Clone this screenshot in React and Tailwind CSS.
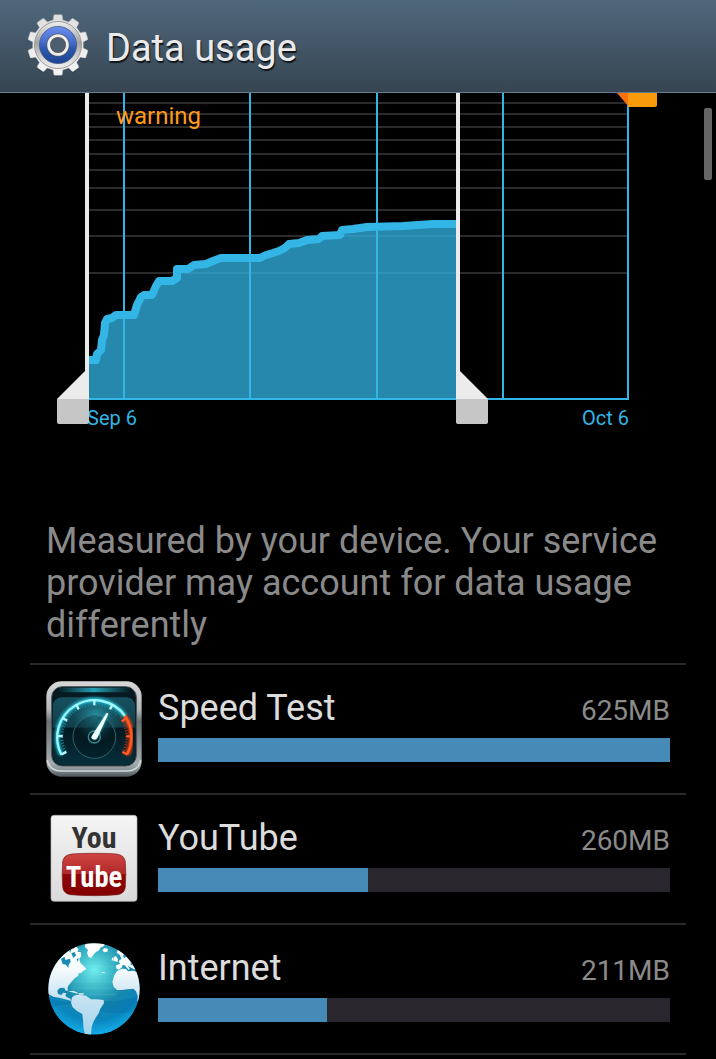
import React from "react";

const GRID_ROWS = [103, 114, 127, 140, 154, 170, 188, 210, 236, 273];
const GRID_COLS = [124, 250, 377, 503];

const SERIES =
  "89,360 96,360 97,354 101,350 102,340 104,335 105,323 107,319 112,318 116,315 134,315 137,305 141,297 144,295 152,295 156,286 159,281 172,281 177,278 177,269 188,269 194,265 206,264 213,261 221,258 260,258 266,255 273,253 279,251 283,249 286,247 289,244 299,243 307,240 319,239 322,236 340,235 342,230 353,229 367,227 403,226 433,224 457,224";

function gearPath(cx, cy, root, tip, teeth) {
  const at = (r, deg) => {
    const a = ((deg - 90) * Math.PI) / 180;
    return `${(cx + r * Math.cos(a)).toFixed(2)} ${(cy + r * Math.sin(a)).toFixed(2)}`;
  };
  const parts = [];
  for (let i = 0; i < teeth; i++) {
    const c = (i * 360) / teeth;
    parts.push(`${at(root, c - 11)} L${at(tip - 1.2, c - 8.5)} L${at(tip, c - 7)} L${at(tip, c + 7)} L${at(tip - 1.2, c + 8.5)} L${at(root, c + 11)}`);
  }
  return `M${parts.join(" L")} Z`;
}

function GearIcon() {
  return (
    <svg viewBox="0 0 64 64" className="size-16 shrink-0" aria-hidden="true">
      <defs>
        <linearGradient id="gearBody" x1="0" y1="0" x2="0" y2="1">
          <stop offset="0" stopColor="#dedede" />
          <stop offset="0.5" stopColor="#ececec" />
          <stop offset="1" stopColor="#f4f4f4" />
        </linearGradient>
        <linearGradient id="gearRing" x1="0" y1="0" x2="0" y2="1">
          <stop offset="0" stopColor="#f0f0f0" />
          <stop offset="0.45" stopColor="#a4a4a4" />
          <stop offset="0.75" stopColor="#d2d2d2" />
          <stop offset="1" stopColor="#f0f0f0" />
        </linearGradient>
        <linearGradient id="gearBlue" x1="0" y1="0" x2="0" y2="1">
          <stop offset="0" stopColor="#6a8eed" />
          <stop offset="0.4" stopColor="#486fd0" />
          <stop offset="0.6" stopColor="#2a58ae" />
          <stop offset="1" stopColor="#1e4590" />
        </linearGradient>
      </defs>
      <path d={gearPath(32, 31.8, 25.5, 31, 10)} fill="#1f2c38" opacity="0.5" />
      <path d={gearPath(32, 31, 25.5, 30.6, 10)} fill="url(#gearBody)" stroke="#a7adb2" strokeWidth="0.5" strokeLinejoin="round" />
      <circle cx="32" cy="31" r="23.5" fill="url(#gearRing)" stroke="#9c9c9c" strokeWidth="1" />
      <circle cx="32" cy="31" r="18.6" fill="url(#gearBlue)" stroke="#41547c" strokeWidth="0.7" />
      <circle cx="32" cy="31" r="9.1" fill="#4a5e70" stroke="#54585f" strokeWidth="5" />
      <circle cx="32" cy="31" r="9.4" fill="none" stroke="#eeeeee" strokeWidth="2.8" />
    </svg>
  );
}

function UsageChart() {
  return (
    <svg viewBox="0 93 716 340" className="block w-full font-[Roboto,sans-serif]" role="img" aria-label="Data usage from Sep 6 to Oct 6">
      {GRID_ROWS.map((y) => (
        <rect key={y} x="89" y={y - 1} width="539" height="2" fill="#2b2b2b" />
      ))}
      <polygon points={`89,399 ${SERIES} 457,399`} fill="#33b5e5" fillOpacity="0.75" />
      <rect x="89" y="398" width="540" height="2" fill="#33b5e5" />
      <polyline points={SERIES} fill="none" stroke="#33b5e5" strokeWidth="8" strokeLinejoin="round" />
      {GRID_COLS.map((x) => (
        <rect key={x} x={x - 1} y="93" width="2" height="306" fill="#33b5e5" />
      ))}
      <rect x="627" y="93" width="2" height="307" fill="#33b5e5" />
      <text x="116" y="124" fontSize="24" fill="#ff9a1a">warning</text>
      <text x="87" y="425" fontSize="20" fill="#33b5e5">Sep 6</text>
      <text x="629" y="425" fontSize="20" fill="#33b5e5" textAnchor="end">Oct 6</text>
      <polygon points="617,93 629,93 629,107" fill="#f9700f" />
      <path d="M628 93h29v12q0 2-2 2h-27z" fill="#fa9a0a" />
      <path d="M85 93h4v307H57v-1l28-28z" fill="#ebebeb" />
      <path d="M57 399h32v23q0 2-2 2H59q-2 0-2-2z" fill="#c6c6c6" />
      <path d="M456 93h4v278l28 28v1h-32z" fill="#ebebeb" />
      <path d="M456 399h32v23q0 2-2 2h-28q-2 0-2-2z" fill="#c6c6c6" />
    </svg>
  );
}

const ray = (deg, r, cx = 175, cy = 201) => {
  const a = (deg * Math.PI) / 180;
  return [cx + r * Math.cos(a), cy + r * Math.sin(a)];
};

function Ticks({ from, to, step, inner, outer, color, width }) {
  const ticks = [];
  for (let d = from; d <= to; d += step) {
    const [x1, y1] = ray(d, inner);
    const [x2, y2] = ray(d, outer);
    ticks.push(<line key={d} x1={x1} y1={y1} x2={x2} y2={y2} stroke={color} strokeWidth={width} />);
  }
  return <g>{ticks}</g>;
}

function SpeedTestIcon() {
  return (
    <svg viewBox="30 33 288 288" className="size-24 shrink-0" aria-hidden="true">
      <defs>
        <linearGradient id="stFrame" x1="0" y1="0" x2="0" y2="1">
          <stop offset="0" stopColor="#d8d8d8" />
          <stop offset="0.3" stopColor="#b5b8ba" />
          <stop offset="0.42" stopColor="#6a7276" />
          <stop offset="0.6" stopColor="#80898d" />
          <stop offset="0.86" stopColor="#a5adb1" />
          <stop offset="0.92" stopColor="#8b9499" />
          <stop offset="1" stopColor="#4b545a" />
        </linearGradient>
        <linearGradient id="stFace" x1="0" y1="0" x2="0" y2="1">
          <stop offset="0" stopColor="#16505f" />
          <stop offset="0.44" stopColor="#123e4b" />
          <stop offset="0.46" stopColor="#04171f" />
          <stop offset="1" stopColor="#05303c" />
        </linearGradient>
        <radialGradient id="stGlow">
          <stop offset="0" stopColor="#2ba3b5" stopOpacity="0.9" />
          <stop offset="1" stopColor="#1b7384" stopOpacity="0" />
        </radialGradient>
        <linearGradient id="stTop">
          <stop offset="0" stopColor="#06161c" />
          <stop offset="0.5" stopColor="#27a0b5" />
          <stop offset="1" stopColor="#06161c" />
        </linearGradient>
        <filter id="stBlur" x="-20%" y="-20%" width="140%" height="140%">
          <feGaussianBlur stdDeviation="5" />
        </filter>
      </defs>
      <rect x="31" y="34" width="286" height="286" rx="46" fill="url(#stFrame)" />
      <path d="M34 270Q40 303 76 303H272Q308 303 314 270" fill="none" stroke="#d2d8da" strokeWidth="5" />
      <rect x="47" y="50" width="254" height="238" rx="32" fill="#071a21" stroke="#4a5256" strokeWidth="3" />
      <rect x="62" y="53" width="224" height="14" rx="7" fill="url(#stTop)" />
      <rect x="51" y="82" width="246" height="202" rx="26" fill="url(#stFace)" />
      <circle cx="180" cy="142" r="72" fill="url(#stGlow)" />
      <circle cx="175" cy="201" r="64" fill="#03141b" fillOpacity="0.35" stroke="#2c6470" strokeWidth="3" />
      <path d="M76 254A112 112 0 0 1 267 138" fill="none" stroke="#20c4dc" strokeWidth="14" filter="url(#stBlur)" />
      <path d="M267 138A112 112 0 0 1 273 254" fill="none" stroke="#ff3c00" strokeWidth="14" filter="url(#stBlur)" />
      <Ticks from={154} to={318} step={5} inner={93} outer={101} color="#178b9d" width={3} />
      <Ticks from={-36} to={26} step={5} inner={93} outer={101} color="#a83415" width={3} />
      <path d="M76 254A112 112 0 0 1 267 138" fill="none" stroke="#9af6fd" strokeWidth="7" />
      <path d="M267 138A112 112 0 0 1 273 254" fill="none" stroke="#ff5a24" strokeWidth="7" />
      <Ticks from={152} to={310} step={29.5} inner={95} outer={112} color="#b5faff" width={7} />
      <Ticks from={-30} to={30} step={29} inner={95} outer={112} color="#ff5a24" width={7} />
      <circle cx="175" cy="201" r="18" fill="#06151b" stroke="#388b98" strokeWidth="4" />
      <path d="M169 199L211 130Q215 127 216 132L184 204Q178 212 171 207Q167 204 169 199Z" fill="#37dfec" filter="url(#stBlur)" opacity="0.7" />
      <path d="M167 199L211 130Q215 127 217 132L184 204Q179 212 171 208Q164 205 167 199Z" fill="#effeff" />
    </svg>
  );
}

function YouTubeIcon() {
  return (
    <svg viewBox="30 33 288 288" className="size-24 shrink-0" aria-hidden="true">
      <defs>
        <linearGradient id="ytCard" x1="0" y1="0" x2="0" y2="1">
          <stop offset="0" stopColor="#f4f4f4" />
          <stop offset="1" stopColor="#dadada" />
        </linearGradient>
        <linearGradient id="ytRed" x1="0" y1="0" x2="0" y2="1">
          <stop offset="0" stopColor="#cf4443" />
          <stop offset="0.48" stopColor="#b02a29" />
          <stop offset="0.5" stopColor="#8f0808" />
          <stop offset="1" stopColor="#840000" />
        </linearGradient>
      </defs>
      <rect x="45" y="46" width="258" height="258" rx="9" fill="url(#ytCard)" stroke="#b5b5b5" strokeWidth="2" />
      <path d="M174 160c-35 0-60 1-72 3q-20 4-22 23-3 37 0 75 2 19 22 23 34 3 72 3t72-3q20-4 22-23 3-38 0-75-2-19-22-23-12-3-72-3z" fill="url(#ytRed)" stroke="#7a2020" strokeWidth="2" />
      <text x="174" y="144" textAnchor="middle" fontSize="90" className="font-['Roboto_Condensed','Liberation_Sans_Narrow','Liberation_Sans',sans-serif] font-bold" fill="#333">You</text>
      <text x="174" y="260" textAnchor="middle" fontSize="86" className="font-['Roboto_Condensed','Liberation_Sans_Narrow','Liberation_Sans',sans-serif] font-bold" fill="#fff">Tube</text>
    </svg>
  );
}

function GlobeIcon() {
  return (
    <svg viewBox="30 33 288 288" className="size-24 shrink-0" aria-hidden="true">
      <defs>
        <radialGradient id="glSea" gradientUnits="userSpaceOnUse" cx="174" cy="120" r="190">
          <stop offset="0" stopColor="#6feef0" />
          <stop offset="0.25" stopColor="#43bfcc" />
          <stop offset="0.55" stopColor="#1788ac" />
          <stop offset="0.8" stopColor="#0a86bd" />
          <stop offset="1" stopColor="#12a9e6" />
        </radialGradient>
        <linearGradient id="glLand" gradientUnits="userSpaceOnUse" x1="0" y1="40" x2="0" y2="314">
          <stop offset="0" stopColor="#ffffff" />
          <stop offset="0.3" stopColor="#f4fafd" />
          <stop offset="0.6" stopColor="#c6e2f1" />
          <stop offset="1" stopColor="#a3d5ef" />
        </linearGradient>
        <clipPath id="glClip">
          <circle cx="174" cy="177" r="137" />
        </clipPath>
      </defs>
      <g clipPath="url(#glClip)">
        <rect x="37" y="40" width="274" height="274" fill="url(#glSea)" />
        <path d="M37 204Q80 222 120 212T210 214Q270 214 311 196V240Q230 262 170 236T37 236Z" fill="#0467a4" opacity="0.3" />
        <g stroke="#8ff4f4" strokeWidth="1.5" opacity="0.3" fill="none">
          <path d="M100 110H240M90 132H240M90 154H235M110 174H230M120 194H240" />
        </g>
        <g fill="url(#glLand)">
          <path d="M30 204V80L76 50L98 46L112 56L118 48L128 58L124 66L134 66L136 78L130 86L133 98L139 104L147 112L151 118L142 122L136 128L128 130L126 138L117 144L108 154L101 162L95 170L95 182L89 182L85 173L71 174L64 182L66 192L76 195L82 188L91 190L88 197L93 202L103 206L106 213L96 210L84 207L70 203L52 200L37 192Z" />
          <path d="M146 50L151 36H208L204 48L193 53L190 60L179 67L172 75L165 85L158 81L153 70L156 60Z" />
          <path d="M199 60L206 54L216 57L214 65L204 67Z" />
          <path d="M232 92L235 80L240 78L246 88L244 96ZM228 84L233 82L232 91L227 92Z" />
          <path d="M241 116L240 106L252 102L248 94L256 86L252 76L242 68L246 58L256 62L300 60L316 110V124L294 118L280 110L274 104L281 116L278 120L266 106L261 104L256 114L248 119Z" />
          <path d="M242 124L258 116L270 117L276 124L292 122L302 126L316 124V216L304 213L305 198L300 184L292 176L274 178L258 180L243 180L233 170L229 156L234 138Z" />
          <path d="M108 202L117 196L130 194L150 197L165 208L183 208L203 210L204 220L193 236L188 250L180 262L172 276L167 292L165 314L147 314L143 296L141 272L139 252L124 244L110 232L105 218Z" />
          <path d="M96 184L112 182L126 188L124 191L108 187ZM128 189L143 190V194H128ZM197 126H206V129H197Z" />
        </g>
        <g fill="#168bb5">
          <path d="M75 86L86 80L88 90L102 86L104 96L98 104L97 114L90 104L80 102ZM106 70L116 66L120 76L112 84ZM100 60L106 58L102 70ZM122 88L128 84L126 96ZM266 84L274 76L272 70L262 74L262 82ZM284 98L296 100L292 106L284 105Z" />
        </g>
      </g>
    </svg>
  );
}

const APPS = [
  { name: "Speed Test", amount: "625MB", percent: 100, Icon: SpeedTestIcon },
  { name: "YouTube", amount: "260MB", percent: 41, Icon: YouTubeIcon },
  { name: "Internet", amount: "211MB", percent: 33, Icon: GlobeIcon },
];

function AppRow({ name, amount, percent, Icon }) {
  return (
    <li className="flex h-[130px] items-start gap-4 border-b-2 border-[#292929] px-4 pt-4">
      <Icon />
      <div className="min-w-0 flex-1 pt-1">
        <div className="flex items-baseline justify-between leading-[46px]">
          <span className="text-4xl leading-[46px] text-[#dcdcdc]">{name}</span>
          <span className="text-[28px] text-[#8a8a8a]">{amount}</span>
        </div>
        <div role="progressbar" aria-label={name} aria-valuenow={percent} aria-valuemin={0} aria-valuemax={100} className="mt-1 h-6 bg-[#29272d]">
          <div className="h-full bg-[#468ab8]" style={{ width: `${percent}%` }} />
        </div>
      </div>
    </li>
  );
}

export default function App() {
  return (
    <div className="relative min-h-screen bg-black font-[Roboto,sans-serif]">
      <header className="flex h-[93px] items-center gap-4 border-b border-[#627d8f] bg-linear-to-b from-[#50687d] to-[#364551] px-[26px]">
        <GearIcon />
        <h1 className="pt-1 text-[38px] leading-[48px] text-[#ebebeb] [text-shadow:1px_2px_1px_#10161c]">Data usage</h1>
      </header>
      <main>
        <UsageChart />
        <p className="mt-[87px] px-[46px] text-4xl leading-[42px] text-[#8a8a8a]">
          Measured by your device. Your service provider may account for data usage differently
        </p>
        <ul className="mx-[30px] mt-[17px] border-t-2 border-[#292929]">
          {APPS.map((app) => (
            <AppRow key={app.name} {...app} />
          ))}
        </ul>
      </main>
      <div className="absolute top-[108px] right-1 h-[72px] w-2 rounded-xs bg-[#646464]" aria-hidden="true" />
    </div>
  );
}
